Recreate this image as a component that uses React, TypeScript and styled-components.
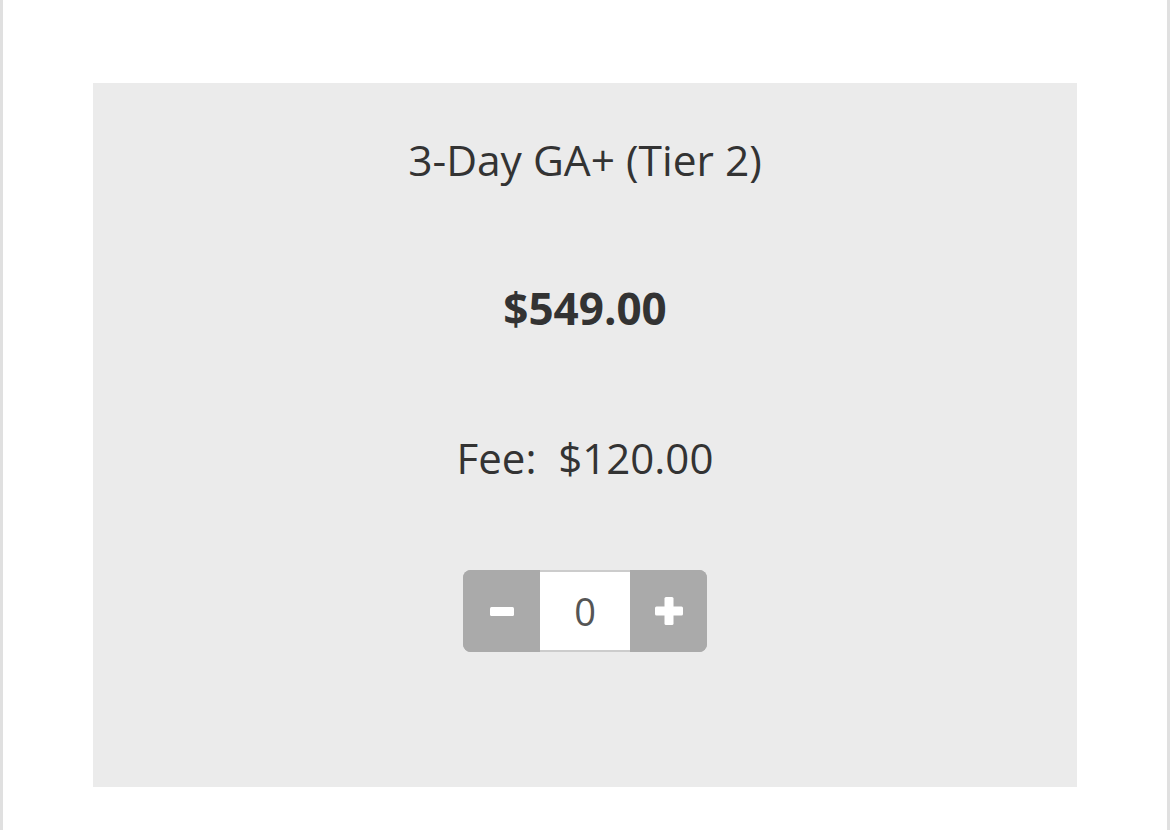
import React from 'react';
import styled, { createGlobalStyle } from 'styled-components';

const GlobalStyle = createGlobalStyle`
  body {
    margin: 0;
    background: #fff;
    font-family: "Open Sans", "Noto Sans", sans-serif;
  }
`;

export default function App() {
  return (
    <>
      <GlobalStyle />
      <Page>
        <TicketCard>
          <Title>3-Day GA+ (Tier 2)</Title>
          <Price>$549.00</Price>
          <Fee>Fee:&nbsp; $120.00</Fee>
          <Stepper>
            <StepButton aria-label="decrease">
              <svg width="24" height="9" viewBox="0 0 24 9">
                <rect x="0" y="0" width="24" height="9" rx="1.5" fill="#fff" />
              </svg>
            </StepButton>
            <Qty>0</Qty>
            <StepButton aria-label="increase">
              <svg width="28" height="28" viewBox="0 0 28 28">
                <rect x="0" y="9.5" width="28" height="9" rx="1.5" fill="#fff" />
                <rect x="9.5" y="0" width="9" height="28" rx="1.5" fill="#fff" />
              </svg>
            </StepButton>
          </Stepper>
        </TicketCard>
      </Page>
    </>
  );
}

const Page = styled.div`
  box-sizing: border-box;
  height: 830px;
  border-left: 3px solid #e0e0e0;
  border-right: 3px solid #e0e0e0;
  padding: 83px 90px 43px;
`;

const TicketCard = styled.div`
  height: 704px;
  background: #ebebeb;
  display: flex;
  flex-direction: column;
  align-items: center;
  color: #333;
`;

const Title = styled.div`
  margin-top: 47px;
  font-size: 42.5px;
  line-height: 60px;
`;

const Price = styled.div`
  margin-top: 88px;
  font-size: 44px;
  font-weight: 700;
  line-height: 60px;
`;

const Fee = styled.div`
  margin-top: 90px;
  font-size: 42px;
  line-height: 60px;
`;

const Stepper = styled.div`
  margin-top: 82px;
  display: flex;
  height: 82px;
  border-radius: 8px;
  overflow: hidden;
  background: #aaa;
`;

const StepButton = styled.button`
  width: 77px;
  border: none;
  background: #aaa;
  display: flex;
  align-items: center;
  justify-content: center;
  padding: 0;
`;

const Qty = styled.div`
  box-sizing: border-box;
  width: 90px;
  background: #fff;
  border-top: 2px solid #ccc;
  border-bottom: 2px solid #ccc;
  display: flex;
  align-items: center;
  justify-content: center;
  font-size: 38px;
  font-weight: 400;
  color: #555;
`;
